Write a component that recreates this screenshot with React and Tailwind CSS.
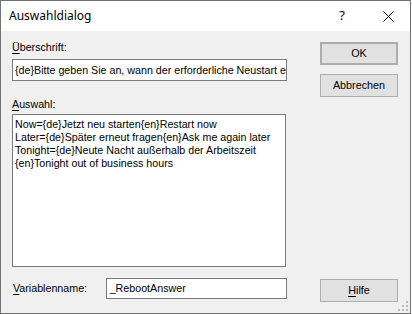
import React from "react";

const body = { fontFamily: '"Liberation Sans", Arial, sans-serif' };
const title = { fontFamily: '"Noto Sans", "Open Sans", sans-serif' };

function Btn({ children, className = "" }) {
  return (
    <div
      className={
        "flex h-[23px] w-[78px] items-center justify-center border border-[#adadad] bg-[#e1e1e1] text-[10.8px] leading-[13px] text-black " +
        className
      }
    >
      {children}
    </div>
  );
}

function Grip() {
  const dots = [
    [8, 0],
    [4, 4],
    [8, 4],
    [0, 8],
    [4, 8],
    [8, 8],
  ];
  return (
    <svg width="10" height="10" viewBox="0 0 10 10" className="absolute bottom-[2px] right-[2px]">
      {dots.map(([x, y], i) => (
        <rect key={i} x={x} y={y} width="2" height="2" fill="#bcbcbc" />
      ))}
    </svg>
  );
}

export default function App() {
  return (
    <div className="h-[314px] w-[412px] bg-white" style={body}>
      <div className="relative flex h-[314px] w-[411px] flex-col border border-[#717171] bg-[#f0f0f0]">
        {/* Title bar */}
        <div className="flex h-[30px] items-center bg-white" style={title}>
          <div className="ml-[8px] text-[12px] text-black">Auswahldialog</div>
          <div className="ml-auto mr-[38px] text-[13px] text-black">?</div>
          <svg width="11" height="11" viewBox="0 0 11 11" className="mr-[16px]">
            <path d="M0.5 0.5 L10.5 10.5 M10.5 0.5 L0.5 10.5" stroke="#000" strokeWidth="1" />
          </svg>
        </div>

        <div className="flex flex-1">
          {/* Left column */}
          <div className="ml-[11px] flex w-[275px] flex-col text-[10.7px] leading-[13px] text-black">
            <div className="mt-[10px] h-[13px]">
              <span className="underline underline-offset-2">Ü</span>berschrift:
            </div>
            <div className="mt-[5px] flex h-[22px] items-center overflow-hidden whitespace-nowrap border border-[#7a7a7a] bg-white pl-[2px]">
              {"{de}Bitte geben Sie an, wann der erforderliche Neustart e"}
            </div>
            <div className="mt-[17px] h-[13px]">
              <span className="underline underline-offset-2">A</span>uswahl:
            </div>
            <div className="mt-[3px] h-[153px] w-[274px] border border-[#7a7a7a] bg-white px-[2px] pt-[3px]">
              <div>{"Now={de}Jetzt neu starten{en}Restart now"}</div>
              <div>{"Later={de}Später erneut fragen{en}Ask me again later"}</div>
              <div>{"Tonight={de}Neute Nacht außerhalb der Arbeitszeit"}</div>
              <div>{"{en}Tonight out of business hours"}</div>
            </div>
            <div className="mt-[11px] flex items-center">
              <div className="ml-[1px] w-[93px]">
                <span className="underline underline-offset-2">V</span>ariablenname:
              </div>
              <div className="flex h-[21px] w-[182px] items-center border border-[#7a7a7a] bg-white pl-[3px]">
                _RebootAnswer
              </div>
            </div>
          </div>

          {/* Right column */}
          <div className="ml-[33px] flex flex-col">
            <Btn className="mt-[11px] border-2 border-[#0078d7]">OK</Btn>
            <Btn className="mt-[9px]">Abbrechen</Btn>
            <Btn className="mt-[182px]">
              <span>
                <span className="underline underline-offset-2">H</span>ilfe
              </span>
            </Btn>
          </div>
        </div>
        <Grip />
      </div>
    </div>
  );
}
